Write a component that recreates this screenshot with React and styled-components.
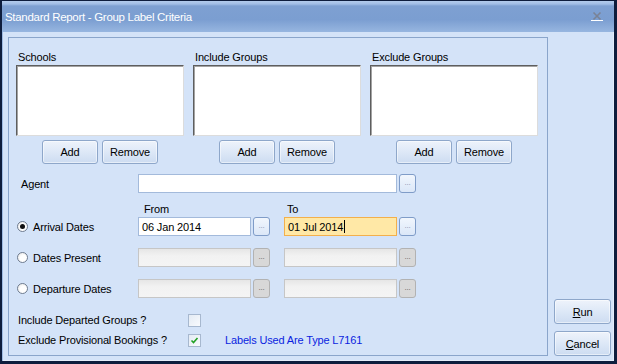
import React from 'react'
import styled, { createGlobalStyle } from 'styled-components'

const GlobalStyle = createGlobalStyle`
  html, body {
    margin: 0;
    padding: 0;
    background: #0e1d3d;
  }
  body {
    font-family: "Liberation Sans", Arial, sans-serif;
    font-size: 11px;
    letter-spacing: -0.15px;
    color: #000;
  }
`

const Window = styled.div`
  width: 617px;
  height: 364px;
  box-sizing: border-box;
  border-style: solid;
  border-color: #0e1d3d;
  border-width: 1px 3px 3px 2px;
  background: #d4e3f8;
  display: flex;
  flex-direction: column;
  box-shadow: inset 1px 0 0 #9fbbe3, inset -1px -1px 0 #e4edfa;
`

const TitleBar = styled.div`
  height: 31px;
  flex-shrink: 0;
  display: flex;
  align-items: center;
  justify-content: space-between;
  padding: 0 11px 0 3px;
  background: linear-gradient(#b3cbec 0, #a2bee6 3px, #7ea0d2 5px, #7b9ed1 60%, #97b6e0 100%);
  color: #fff;
`

const Title = styled.span`
  font-size: 11.5px;
  letter-spacing: -0.3px;
`

const Body = styled.div`
  flex: 1;
  display: flex;
  padding: 5px 0 5px 6px;
`

const Frame = styled.div`
  width: 540px;
  box-sizing: border-box;
  border: 1px solid #8aa5cb;
  display: flex;
  flex-direction: column;
`

const Side = styled.div`
  flex: 1;
  display: flex;
  flex-direction: column;
  justify-content: flex-end;
  gap: 7px;
  padding-left: 6px;
`

const ListsRow = styled.div`
  display: flex;
  gap: 9px;
  padding: 12px 0 0 7px;
`

const ListColumn = styled.div`
  width: 168px;
  display: flex;
  flex-direction: column;
`

const ListLabel = styled.div`
  height: 14px;
  line-height: 14px;
  padding-left: 2px;
  margin-bottom: 1px;
`

const ListBox = styled.div`
  height: 71px;
  box-sizing: border-box;
  background: #fff;
  border: 1px solid;
  border-color: #5e5e5e #dcdcdc #dcdcdc #5e5e5e;
  box-shadow: inset 1px 1px 0 #a3a3a3;
`

const ButtonPair = styled.div`
  display: flex;
  justify-content: center;
  gap: 4px;
  margin-top: 4px;
`

const Button = styled.div`
  width: ${p => p.$w || 56}px;
  height: ${p => p.$h || 24}px;
  box-sizing: border-box;
  border: 1px solid #8ea7ca;
  border-radius: 3px;
  background: linear-gradient(#eef3fb, #dde8f7 50%, #cddcf1);
  box-shadow: inset 0 0 0 1px rgba(255, 255, 255, 0.5);
  display: flex;
  align-items: center;
  justify-content: center;
`

const Key = styled.span`
  text-decoration: underline;
`

const FieldRow = styled.div`
  display: flex;
  align-items: center;
  height: 19px;
  padding-left: ${p => p.$indent}px;
  margin-top: ${p => p.$top || 0}px;
`

const Caption = styled.div`
  width: ${p => p.$w}px;
  display: flex;
  align-items: center;
  gap: 5px;
`

const TextBox = styled.div`
  width: ${p => p.$w}px;
  height: 19px;
  box-sizing: border-box;
  border: 1px solid ${p => (p.$focus ? '#f3b04c' : p.$disabled ? '#c6c6c6' : '#a3badb')};
  background: ${p =>
    p.$focus ? '#ffe8a6' : p.$disabled ? 'linear-gradient(#e6e6e6, #f2f2f2 40%, #f4f4f4)' : '#fff'};
  margin-left: ${p => p.$gap || 0}px;
  display: flex;
  align-items: center;
  padding-left: 3px;
  white-space: nowrap;
`

const Caret = styled.span`
  display: inline-block;
  width: 1px;
  height: 13px;
  background: #000;
  margin-left: 1px;
`

const Ellipsis = styled.div`
  width: 17px;
  height: 19px;
  margin-left: 2px;
  box-sizing: border-box;
  border: 1px solid ${p => (p.$disabled ? '#b2b2b2' : '#7f9cc8')};
  border-radius: 3px;
  background: ${p => (p.$disabled ? '#d8d8d8' : 'linear-gradient(#f1f6fd, #dbe7f8)')};
  color: ${p => (p.$disabled ? '#5f5f5f' : '#8393ab')};
  font-size: 8px;
  line-height: 8px;
  display: flex;
  align-items: flex-end;
  justify-content: center;
  padding-bottom: 5px;
`

const HeaderRow = styled.div`
  height: 24px;
  display: flex;
  align-items: flex-end;
  padding: 0 0 1px 135px;
  box-sizing: border-box;
  line-height: 14px;
`

const HeaderCell = styled.span`
  width: ${p => p.$w || 'auto'}px;
`

const DateRows = styled.div`
  display: flex;
  flex-direction: column;
  gap: 12px;
`

const Radio = styled.span`
  width: 11px;
  height: 11px;
  box-sizing: border-box;
  border-radius: 50%;
  border: 1px solid #6f7c8f;
  background: radial-gradient(circle at 60% 60%, #fff 40%, #e2e2e2 100%);
  display: flex;
  align-items: center;
  justify-content: center;
  &::after {
    content: '';
    width: 5px;
    height: 5px;
    border-radius: 50%;
    background: ${p => (p.$checked ? '#111' : 'transparent')};
  }
`

const Options = styled.div`
  margin-top: 12px;
  display: flex;
  flex-direction: column;
`

const OptionRow = styled.div`
  height: 20px;
  display: flex;
  align-items: center;
  padding-left: 9px;
`

const OptionLabel = styled.span`
  width: 170px;
`

const CheckBox = styled.span`
  width: 13px;
  height: 13px;
  box-sizing: border-box;
  border: 1px solid #a7b8cf;
  background: linear-gradient(135deg, #e4ebf4, #f8fafd);
  display: flex;
  align-items: center;
  justify-content: center;
`

const Note = styled.span`
  margin-left: 24px;
  color: #0a1ee0;
`

const CloseIcon = () => (
  <svg width="12" height="11" viewBox="0 0 12 11">
    <path d="M2.5 1.5 L9.5 8.5 M9.5 1.5 L2.5 8.5" stroke="#7a8396" strokeWidth="1.6" />
    <path d="M0 9.5 H12" stroke="#fff" strokeWidth="1" />
  </svg>
)

const Tick = () => (
  <svg width="9" height="9" viewBox="0 0 9 9">
    <path d="M1.5 4.5 L3.5 6.5 L7.5 2" fill="none" stroke="#21a124" strokeWidth="1.6" />
  </svg>
)

const lists = ['Schools', 'Include Groups', 'Exclude Groups']

const dateRows = [
  { label: 'Arrival Dates', checked: true, from: '06 Jan 2014', to: '01 Jul 2014' },
  { label: 'Dates Present', disabled: true },
  { label: 'Departure Dates', disabled: true },
]

export default function App() {
  return (
    <Window>
      <GlobalStyle />
      <TitleBar>
        <Title>Standard Report - Group Label Criteria</Title>
        <CloseIcon />
      </TitleBar>
      <Body>
        <Frame>
          <ListsRow>
            {lists.map(name => (
              <ListColumn key={name}>
                <ListLabel>{name}</ListLabel>
                <ListBox />
                <ButtonPair>
                  <Button>Add</Button>
                  <Button>Remove</Button>
                </ButtonPair>
              </ListColumn>
            ))}
          </ListsRow>

          <FieldRow $indent={12} $top={10}>
            <Caption $w={117}>Agent</Caption>
            <TextBox $w={259} />
            <Ellipsis>...</Ellipsis>
          </FieldRow>

          <HeaderRow>
            <HeaderCell $w={143}>From</HeaderCell>
            <HeaderCell>To</HeaderCell>
          </HeaderRow>

          <DateRows>
            {dateRows.map(row => (
              <FieldRow key={row.label} $indent={8}>
                <Caption $w={121}>
                  <Radio $checked={row.checked} />
                  {row.label}
                </Caption>
                <TextBox $w={113} $disabled={row.disabled}>{row.from}</TextBox>
                <Ellipsis $disabled={row.disabled}>...</Ellipsis>
                <TextBox $w={113} $gap={14} $disabled={row.disabled} $focus={!!row.to}>
                  {row.to}
                  {row.to && <Caret />}
                </TextBox>
                <Ellipsis $disabled={row.disabled}>...</Ellipsis>
              </FieldRow>
            ))}
          </DateRows>

          <Options>
            <OptionRow>
              <OptionLabel>Include Departed Groups ?</OptionLabel>
              <CheckBox />
            </OptionRow>
            <OptionRow>
              <OptionLabel>Exclude Provisional Bookings ?</OptionLabel>
              <CheckBox><Tick /></CheckBox>
              <Note>Labels Used Are Type L7161</Note>
            </OptionRow>
          </Options>
        </Frame>
        <Side>
          <Button $w={57} $h={25}><span><Key>R</Key>un</span></Button>
          <Button $w={57} $h={25}><span><Key>C</Key>ancel</span></Button>
        </Side>
      </Body>
    </Window>
  )
}
